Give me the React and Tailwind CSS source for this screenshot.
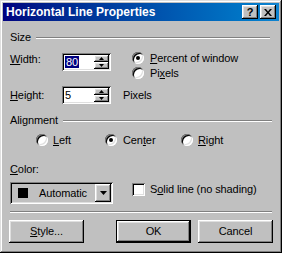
import React from "react";

const raised =
  "bg-[#c0c0c0] shadow-[inset_-1px_-1px_#000,inset_1px_1px_#fff,inset_-2px_-2px_#808080,inset_2px_2px_#dfdfdf]";
const sunken =
  "shadow-[inset_1px_1px_#808080,inset_-1px_-1px_#fff,inset_2px_2px_#000,inset_-2px_-2px_#dfdfdf]";

function Etched({ className = "" }) {
  return <div className={"h-[2px] border-t border-b border-t-[#808080] border-b-white " + className} />;
}

function Radio({ checked }) {
  return (
    <div className={"w-[12px] h-[12px] rounded-full bg-white flex items-center justify-center shrink-0 " + sunken}>
      {checked && <div className="w-[4px] h-[4px] rounded-full bg-black" />}
    </div>
  );
}

function Tri({ up, w = 5, h = 3 }) {
  return (
    <svg width={w} height={h} viewBox={`0 0 ${w} ${h}`}>
      {up ? (
        <polygon points={`0,${h} ${w},${h} ${w / 2},0`} fill="#000" />
      ) : (
        <polygon points={`0,0 ${w},0 ${w / 2},${h}`} fill="#000" />
      )}
    </svg>
  );
}

function Spin({ children }) {
  return (
    <div className={"w-[49px] h-[18px] bg-white p-[2px] flex " + sunken}>
      <div className="flex-1 flex items-center pl-[1px] leading-[12px]">{children}</div>
      <div className="w-[15px] flex flex-col">
        <div className={"h-[7px] flex items-center justify-center " + raised}>
          <Tri up />
        </div>
        <div className={"h-[7px] flex items-center justify-center " + raised}>
          <Tri />
        </div>
      </div>
    </div>
  );
}

function Btn({ children, def }) {
  return (
    <div
      className={
        "w-[75px] h-[23px] flex items-center justify-center " +
        (def
          ? "bg-[#c0c0c0] border border-black shadow-[inset_-1px_-1px_#000,inset_1px_1px_#fff,inset_-2px_-2px_#808080,inset_2px_2px_#dfdfdf]"
          : raised)
      }
    >
      {children}
    </div>
  );
}

export default function App() {
  return (
    <div className="w-[282px] h-[253px] bg-[#c0c0c0] p-[3px] flex flex-col text-black text-[11px] leading-[13px] tracking-[-0.1px] font-['Liberation_Sans',Arial,sans-serif] shadow-[inset_-1px_-1px_#000,inset_1px_1px_#dfdfdf,inset_-2px_-2px_#808080,inset_2px_2px_#fff]">
      {/* Title bar */}
      <div className="h-[18px] bg-gradient-to-r from-[#000080] to-[#1084d0] flex items-center pl-[3px] pr-[3px]">
        <span className="flex-1 text-white font-bold text-[12px] tracking-normal">Horizontal Line Properties</span>
        <div className={"w-[16px] h-[14px] flex items-center justify-center font-bold text-[11px] " + raised}>?</div>
        <div className={"w-[16px] h-[14px] ml-[2px] flex items-center justify-center " + raised}>
          <svg width="8" height="7" viewBox="0 0 8 7">
            <path d="M0,0 L2,0 L4,2.5 L6,0 L8,0 L5,3.5 L8,7 L6,7 L4,4.5 L2,7 L0,7 L3,3.5 Z" fill="#000" />
          </svg>
        </div>
      </div>

      {/* Content */}
      <div className="flex flex-col px-[6px]">
        {/* Size */}
        <div className="mt-[10px] h-[13px] flex items-center pl-[1px]">
          <span>Size</span>
          <Etched className="flex-1 ml-[5px] mr-[3px]" />
        </div>

        <div className="mt-[9px] h-[33px] flex items-start">
          <div className="w-[53px] pl-[1px] mt-[-1px] pt-[1px]">
            <u>W</u>idth:
          </div>
          <Spin>
            <span className="bg-[#000080] text-white px-[1px]">80</span>
          </Spin>
          <div className="ml-[21px] -mt-[1px] flex flex-col gap-[3px]">
            <div className="flex items-center h-[12px]">
              <Radio checked />
              <span className="ml-[6px]">
                <u>P</u>ercent of window
              </span>
            </div>
            <div className="flex items-center h-[12px]">
              <Radio />
              <span className="ml-[6px]">
                Pi<u>x</u>els
              </span>
            </div>
          </div>
        </div>

        <div className="h-[18px] flex items-center">
          <div className="w-[53px] pl-[1px]">
            <u>H</u>eight:
          </div>
          <Spin>
            <span>5</span>
          </Spin>
          <span className="ml-[12px]">Pixels</span>
        </div>

        {/* Alignment */}
        <div className="mt-[10px] h-[13px] flex items-center pl-[1px]">
          <span>Alignment</span>
          <Etched className="flex-1 ml-[5px] mr-[1px]" />
        </div>

        <div className="mt-[7px] h-[12px] flex items-center pl-[27px]">
          <div className="w-[69px] flex items-center">
            <Radio />
            <span className="ml-[5px]">
              <u>L</u>eft
            </span>
          </div>
          <div className="w-[76px] flex items-center">
            <Radio checked />
            <span className="ml-[6px]">
              Cen<u>t</u>er
            </span>
          </div>
          <div className="flex items-center">
            <Radio />
            <span className="ml-[5px]">
              <u>R</u>ight
            </span>
          </div>
        </div>

        {/* Color */}
        <div className="mt-[17px] h-[13px] pl-[1px]">
          <u>C</u>olor:
        </div>

        <div className="mt-[6px] flex items-start">
          <div className={"ml-[1px] w-[103px] h-[22px] bg-[#c0c0c0] p-[2px] flex " + sunken}>
            <div className="flex-1 flex items-center pl-[6px]">
              <div className="w-[10px] h-[10px] bg-black" />
              <span className="ml-[11px]">Automatic</span>
            </div>
            <div className={"w-[16px] h-[18px] flex items-center justify-center " + raised}>
              <Tri w={7} h={4} />
            </div>
          </div>
          <div className={"ml-[19px] mt-[1px] w-[13px] h-[13px] bg-white shrink-0 " + sunken} />
          <span className="ml-[5px] mt-[1px]">
            S<u>o</u>lid line (no shading)
          </span>
        </div>

        <Etched className="mt-[7px] mx-[1px]" />

        <div className="mt-[7px] flex items-center">
          <Btn>
            <span>
              <u>S</u>tyle...
            </span>
          </Btn>
          <div className="ml-auto">
            <Btn def>OK</Btn>
          </div>
          <div className="ml-[7px]">
            <Btn>Cancel</Btn>
          </div>
        </div>
      </div>
    </div>
  );
}
